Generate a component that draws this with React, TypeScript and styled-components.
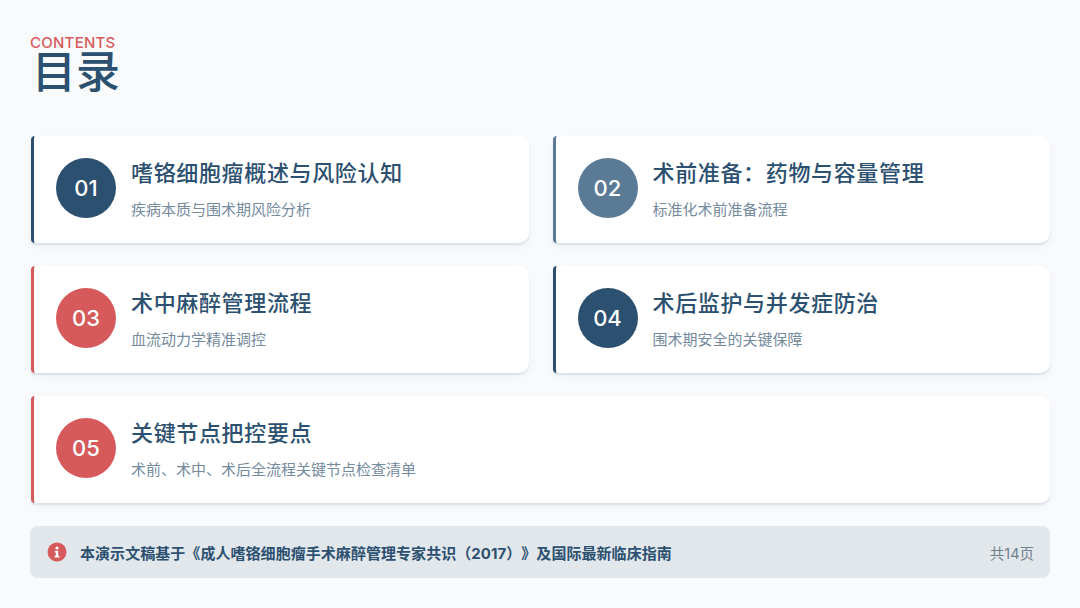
import React from 'react';
import styled, { createGlobalStyle } from 'styled-components';

const GlobalStyle = createGlobalStyle`
  html, body {
    margin: 0;
    padding: 0;
    background: #f8fafc;
  }
  body {
    font-family: Inter, "Noto Sans CJK SC", sans-serif;
    text-spacing-trim: space-all;
  }
`;

const NAVY = '#2c5070';
const SLATE = '#5a7a96';
const RED = '#d65a5c';

const items = [
  { no: '01', title: '嗜铬细胞瘤概述与风险认知', desc: '疾病本质与围术期风险分析', color: NAVY },
  { no: '02', title: '术前准备：药物与容量管理', desc: '标准化术前准备流程', color: SLATE },
  { no: '03', title: '术中麻醉管理流程', desc: '血流动力学精准调控', color: RED },
  { no: '04', title: '术后监护与并发症防治', desc: '围术期安全的关键保障', color: NAVY },
  { no: '05', title: '关键节点把控要点', desc: '术前、术中、术后全流程关键节点检查清单', color: RED, wide: true },
];

export default function App() {
  return (
    <Page>
      <GlobalStyle />
      <Header>
        <Eyebrow>CONTENTS</Eyebrow>
        <Title>目录</Title>
      </Header>
      <Grid>
        {items.map((item) => (
          <Card key={item.no} $color={item.color} $wide={item.wide}>
            <Badge $color={item.color}>{item.no}</Badge>
            <div>
              <CardTitle>{item.title}</CardTitle>
              <CardDesc>{item.desc}</CardDesc>
            </div>
          </Card>
        ))}
      </Grid>
      <Footer>
        <Note>
          <svg width="20" height="20" viewBox="0 0 20 20">
            <circle cx="10" cy="10" r="9.5" fill={RED} />
            <circle cx="10" cy="6" r="1.6" fill="#fff" />
            <path d="M7.8 8.8h3.4v5h1.2v1.7H7.6v-1.7h1.2v-3.3h-1z" fill="#fff" />
          </svg>
          <NoteText>本演示文稿基于《成人嗜铬细胞瘤手术麻醉管理专家共识（2017）》及国际最新临床指南</NoteText>
        </Note>
        <PageCount>共14页</PageCount>
      </Footer>
    </Page>
  );
}

const Page = styled.div`
  box-sizing: border-box;
  width: 1080px;
  height: 608px;
  padding: 36px 30px 0 30px;
  overflow: hidden;
  background: #f8fafc;
`;

const Header = styled.header`
  height: 100px;
`;

const Eyebrow = styled.div`
  font-size: 15px;
  line-height: 14px;
  font-weight: 500;
  letter-spacing: 0.25px;
  color: ${RED};
`;

const Title = styled.h1`
  margin: 0;
  font-size: 44px;
  line-height: 44px;
  font-weight: 500;
  color: ${NAVY};
  padding-left: 2px;
`;

const Grid = styled.div`
  display: grid;
  grid-template-columns: 497.5px 497.5px;
  grid-auto-rows: 107px;
  column-gap: 24px;
  row-gap: 23px;
  padding-left: 1px;
`;

const Card = styled.div<{ $color: string; $wide?: boolean }>`
  display: flex;
  align-items: flex-start;
  gap: 15px;
  box-sizing: border-box;
  padding: 22px 0 0 22px;
  grid-column: ${(p) => (p.$wide ? '1 / -1' : 'auto')};
  background: #fff;
  border-left: 3px solid ${(p) => p.$color};
  border-radius: 4px 10px 10px 4px;
  box-shadow: 0 2px 2px rgba(44, 80, 112, 0.13), 0 4px 14px rgba(44, 80, 112, 0.03);
`;

const Badge = styled.div<{ $color: string }>`
  flex: none;
  display: flex;
  align-items: center;
  justify-content: center;
  width: 60px;
  height: 60px;
  border-radius: 50%;
  background: ${(p) => p.$color};
  color: #fff;
  font-size: 22px;
  font-weight: 450;
`;

const CardTitle = styled.div`
  font-size: 22px;
  line-height: 30px;
  font-weight: 500;
  letter-spacing: 0.65px;
  color: ${NAVY};
`;

const CardDesc = styled.div`
  margin-top: 12px;
  font-size: 15px;
  line-height: 20px;
  color: #748a9d;
`;

const Footer = styled.footer`
  display: flex;
  align-items: center;
  justify-content: space-between;
  box-sizing: border-box;
  height: 52px;
  margin-top: 23px;
  padding: 0 16px 0 17px;
  background: #e2e7ec;
  border-radius: 8px;
`;

const Note = styled.div`
  display: flex;
  align-items: center;
  gap: 13px;
`;

const NoteText = styled.span`
  font-size: 15px;
  font-weight: 700;
  letter-spacing: 0.05px;
  color: ${NAVY};
`;

const PageCount = styled.span`
  font-size: 14.5px;
  color: #6f7f8c;
`;
